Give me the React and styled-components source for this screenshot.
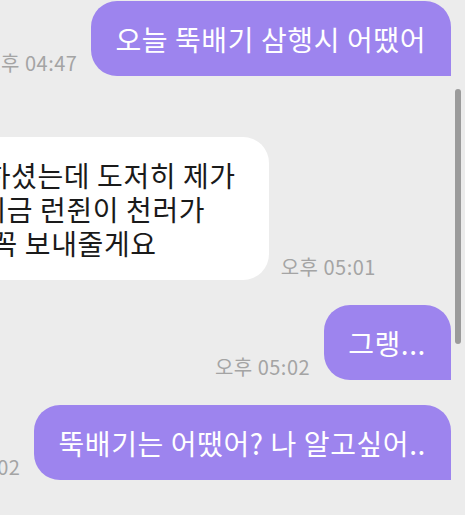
import styled, { createGlobalStyle } from "styled-components";

const Global = createGlobalStyle`
    html, body {
        margin: 0;
        padding: 0;
        background: #ececec;
        overflow: hidden;
    }
    body {
        font-family: "Noto Sans CJK KR", "Noto Sans", sans-serif;
    }
`;

const Screen = styled.div`
    position: relative;
    width: 465px;
    height: 515px;
    overflow: hidden;
    background: #ececec;
`;

const Chat = styled.div`
    display: flex;
    flex-direction: column;
    padding: 1px 14px 0 0;
`;

const Row = styled.div`
    display: flex;
    align-items: flex-end;
    justify-content: ${(p) => (p.mine ? "flex-end" : "flex-start")};
    gap: ${(p) => (p.mine ? "14px" : "12px")};
    margin-top: ${(p) => p.top || 0}px;
    margin-left: ${(p) => p.shift || 0}px;
`;

const Bubble = styled.div`
    font-size: 28px;
    line-height: 34px;
    letter-spacing: 0.6px;
    white-space: nowrap;
    padding: 21px 25px 20px 24px;
    background: ${(p) => (p.mine ? "#9d84ee" : "#ffffff")};
    color: ${(p) => (p.mine ? "#ffffff" : "#1a1a1a")};
    border-radius: ${(p) => (p.mine ? "26px 26px 0 26px" : "26px 26px 26px 0")};
    ${(p) => !p.mine && "padding-right: 33px;"}
`;

const Time = styled.span`
    font-size: 20px;
    line-height: 22px;
    letter-spacing: 0.5px;
    color: #a4a4a4;
    white-space: nowrap;
    margin-bottom: 2px;
`;

const Scroll = styled.div`
    position: absolute;
    right: 4px;
    top: 89px;
    width: 6px;
    height: 255px;
    border-radius: 3px;
    background: #9b9b9b;
`;

export default function App() {
    return (
        <Screen>
            <Global />
            <Chat>
                <Row mine>
                    <Time>오후 04:47</Time>
                    <Bubble mine>오늘 뚝배기 삼행시 어땠어</Bubble>
                </Row>
                <Row top={61} shift={-92}>
                    <Bubble>
                        말씀하셨는데 도저히 제가
                        <br />
                        저,{"\u00a0 "}지금 런쥔이 천러가
                        <br />
                        그럼 꼭 보내줄게요
                    </Bubble>
                    <Time>오후 05:01</Time>
                </Row>
                <Row mine top={25}>
                    <Time>오후 05:02</Time>
                    <Bubble mine>그랭...</Bubble>
                </Row>
                <Row mine top={25}>
                    <Time>오후 05:02</Time>
                    <Bubble mine>뚝배기는 어땠어? 나 알고싶어..</Bubble>
                </Row>
            </Chat>
            <Scroll />
        </Screen>
    );
}
